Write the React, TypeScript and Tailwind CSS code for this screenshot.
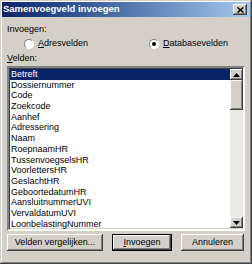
import React from "react";

const fields = [
  "Betreft",
  "Dossiernummer",
  "Code",
  "Zoekcode",
  "Aanhef",
  "Adressering",
  "Naam",
  "RoepnaamHR",
  "TussenvoegselsHR",
  "VoorlettersHR",
  "GeslachtHR",
  "GeboortedatumHR",
  "AansluitnummerUVI",
  "VervaldatumUVI",
  "LoonbelastingNummer",
];

// raised 3d edge (buttons, thumb)
const raised =
  "bg-[#d4d0c8] shadow-[inset_-1px_-1px_#404040,inset_1px_1px_#ffffff,inset_-2px_-2px_#808080,inset_2px_2px_#d4d0c8]";

function Radio({ checked, label }: { checked?: boolean; label: React.ReactNode }) {
  return (
    <div className="flex items-center gap-[4px]">
      <div className="w-[10px] h-[10px] rounded-full bg-white border border-t-[#808080] border-l-[#808080] border-b-[#ffffff] border-r-[#ffffff] flex items-center justify-center">
        {checked && <div className="w-[4px] h-[4px] rounded-full bg-black" />}
      </div>
      <span>{label}</span>
    </div>
  );
}

function Arrow({ up }: { up?: boolean }) {
  return (
    <svg width="7" height="4" viewBox="0 0 7 4">
      {up ? <path d="M3.5 0 L7 4 L0 4 Z" fill="#000" /> : <path d="M0 0 L7 0 L3.5 4 Z" fill="#000" />}
    </svg>
  );
}

export default function App() {
  return (
    <div
      className="w-[252px] h-[264px] bg-[#d4d0c8] text-black text-[9px] flex flex-col shadow-[inset_-1px_-1px_#404040,inset_1px_1px_#d4d0c8,inset_-2px_-2px_#808080,inset_2px_2px_#ffffff]"
      style={{ fontFamily: '"Liberation Sans", Arial, sans-serif' }}
    >
      {/* title bar */}
      <div className="mx-[2px] mt-[2px] h-[15px] bg-gradient-to-r from-[#0a246a] to-[#a6caf0] flex items-center justify-between pl-[1px] pr-[3px]">
        <span className="text-white font-bold text-[9.5px]">Samenvoegveld invoegen</span>
        <div className={`w-[14px] h-[11px] ${raised} flex items-center justify-center`}>
          <svg width="7" height="6" viewBox="0 0 7 6">
            <path d="M0.5 0.5 L6.5 5.5 M6.5 0.5 L0.5 5.5" stroke="#000" strokeWidth="1.6" />
          </svg>
        </div>
      </div>

      <div className="flex flex-col px-[7px] pt-[7px]">
        <div className="leading-[11px]">Invoegen:</div>
        <div className="flex mt-[3px] pl-[17px] leading-[11px]">
          <div className="w-[125px]">
            <Radio label={<><span className="underline">A</span>dresvelden</>} />
          </div>
          <Radio checked label={<><span className="underline">D</span>atabasevelden</>} />
        </div>
        <div className="mt-[4px] leading-[11px]">
          <span className="underline">V</span>elden:
        </div>

        {/* list box */}
        <div className="mt-[2px] w-[238px] h-[165px] flex bg-white border-2 border-t-[#808080] border-l-[#808080] border-b-[#ffffff] border-r-[#ffffff] shadow-[inset_1px_1px_#404040,inset_-1px_-1px_#d4d0c8]">
          <div className="flex-1 flex flex-col pt-[1px] pl-[1px]">
            {fields.map((f, i) => (
              <div
                key={f}
                className={`h-[10.7px] leading-[10.7px] pl-[1px] whitespace-nowrap ${
                  i === 0 ? "bg-[#0a246a] text-white" : ""
                }`}
              >
                {f}
              </div>
            ))}
          </div>
          <div className="w-[13px] flex flex-col bg-[#ebe9e4] mt-[1px] mb-[1px]">
            <div className={`h-[11px] ${raised} flex items-center justify-center`}>
              <Arrow up />
            </div>
            <div className={`h-[30px] ${raised}`} />
            <div className="flex-1" />
            <div className={`h-[11px] ${raised} flex items-center justify-center`}>
              <Arrow />
            </div>
          </div>
        </div>

        {/* buttons */}
        <div className="flex mt-[3px] gap-[9px]">
          <div className={`w-[96px] h-[17px] ${raised} flex items-center justify-center`}>
            Velden vergeli<span className="underline">j</span>ken...
          </div>
          <div className="w-[60px] h-[17px] border border-black">
            <div className={`w-full h-full ${raised} flex items-center justify-center`}>
              <span className="underline">I</span>nvoegen
            </div>
          </div>
          <div className={`w-[63px] h-[17px] ${raised} flex items-center justify-center`}>
            Annuleren
          </div>
        </div>
      </div>
    </div>
  );
}
